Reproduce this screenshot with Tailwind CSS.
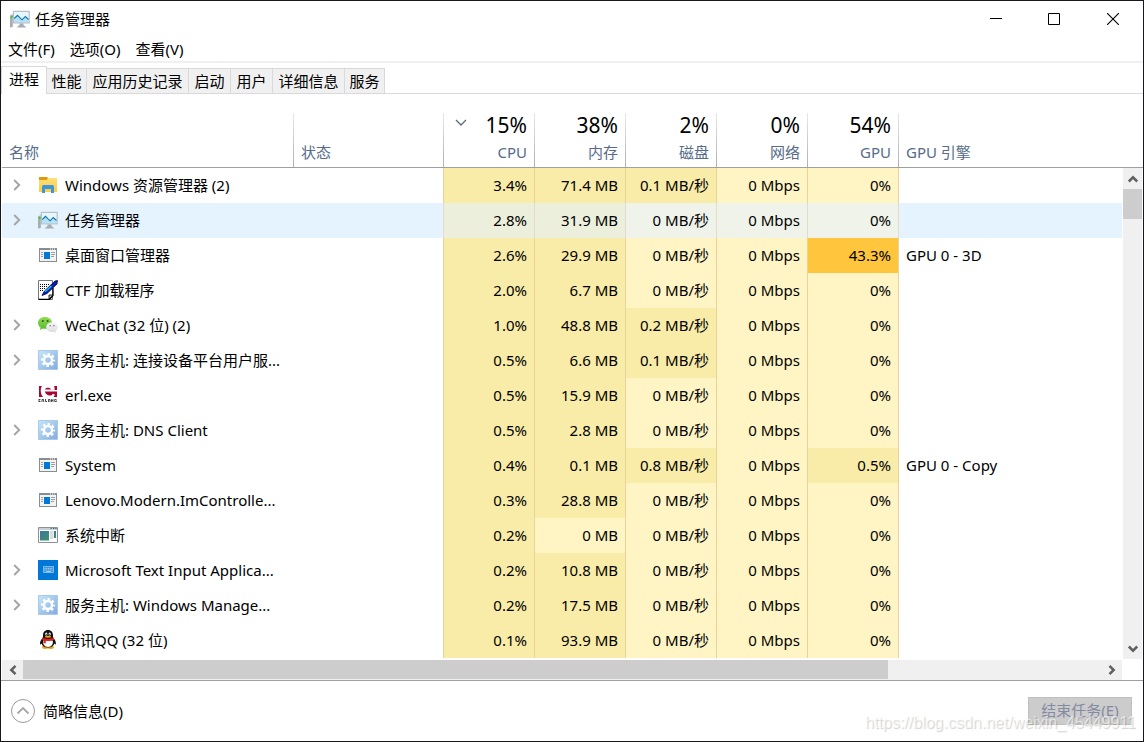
<!DOCTYPE html>
<html lang="zh-CN">
<head>
<meta charset="utf-8">
<title>任务管理器</title>
<script src="https://cdn.jsdelivr.net/npm/@tailwindcss/browser@4"></script>
</head>
<body class="h-screen overflow-hidden bg-white font-['Noto_Sans','Noto_Sans_CJK_SC',sans-serif] text-[15px] leading-5 text-black">

<svg class="absolute size-0" aria-hidden="true">
  <defs>
    <linearGradient id="gGear" x1="0" y1="0" x2="1" y2="1"><stop offset="0" stop-color="#c3e8f9"/><stop offset="1" stop-color="#84a9e2"/></linearGradient>
    <linearGradient id="gFolder" x1="0" y1="0" x2="0" y2="1"><stop offset="0" stop-color="#ffdf76"/><stop offset="1" stop-color="#ffcb43"/></linearGradient>
    <linearGradient id="gApp" x1="0" y1="0" x2="1" y2="1"><stop offset="0" stop-color="#3f72a8"/><stop offset="1" stop-color="#3f9560"/></linearGradient>
    <linearGradient id="gGreen" x1="0" y1="0" x2="0" y2="1"><stop offset="0" stop-color="#93dc4f"/><stop offset="1" stop-color="#55b832"/></linearGradient>
    <linearGradient id="gGrey" x1="0" y1="0" x2="0" y2="1"><stop offset="0" stop-color="#f4f4f4"/><stop offset="1" stop-color="#d9dcdf"/></linearGradient>
  </defs>
  <symbol id="taskmgr" viewBox="0 0 20 20">
    <path d="M0 6.500 2.800 5v13L0 18.500z" fill="#a8adb0"/><path d="M.8 7h2v2h-2z" fill="#2fd32f"/>
    <path d="M2.800 1.800h17v12.600h-17z" fill="#b9bfc3"/><path d="M4 3h14.600v10H4z" fill="#e6f6fd"/>
    <path d="M4 10l3.500-3.500 3 3 1.500 1.500 3.500-3.500 3 3v3H4z" fill="#b4e1f5"/>
    <path d="M4.300 9.500 7.500 6.300 12 10.800l3.300-3.300 3.200 3" fill="none" stroke="#1576b4" stroke-width="1.100"/>
    <path d="M9.500 14.400h4v1.600l3 2.500H6.500l3-2.500z" fill="#a9adb0"/>
  </symbol>
  <symbol id="folder" viewBox="0 0 20 20">
    <path d="M1 2h8.300l1 2v2H1z" fill="#de9a10"/><path d="M1 5h7.500l1.600-2H19v14H1z" fill="url(#gFolder)"/>
    <path d="M4 18v-6.500L5 10h10l1 1.500V18h-3v-4H7v4z" fill="#3a96dd"/>
  </symbol>
  <symbol id="exe" viewBox="0 0 20 20">
    <path d="M1 3h18v14H1z" fill="#8a8d8f"/><path d="M2 5h16v11H2z" fill="#f3f3f3"/>
    <path d="M12 3.500h1v1h-1zM14 3.500h1v1h-1zM16 3.500h1v1h-1z" fill="#fff"/>
    <path d="M6 7h6v7H6z" fill="#0078d7"/>
    <path d="M3 7.500h2M3 9.500h2M3 11.500h2M13 7.500h4M13 9.500h4M13 11.500h3" stroke="#98a0a6"/>
  </symbol>
  <symbol id="ctf" viewBox="0 0 20 20">
    <path d="M.5.500h14v19H.5z" fill="#fff" stroke="#777"/><path d="M.5 19.500h11l3.500-4V8" fill="none" stroke="#000" stroke-width="1.300"/>
    <path d="M11 19v-4h4z" fill="#bbb" stroke="#000" stroke-width=".8"/>
    <path d="M2 4.500h9M2 6.500h7M2 8.500h6M2 10.500h4" stroke="#000" stroke-dasharray="1 1"/>
    <path d="M4 15.500 6.500 11 17 1l2.500-.5L19 4 9 13.500z" fill="#0b1bb0" stroke="#000050" stroke-width=".8"/>
    <path d="M7 11.800 13.500 6" stroke="#15c9ee" stroke-width="1.300"/>
  </symbol>
  <symbol id="wechat" viewBox="0 0 20 20">
    <path d="M7 2C3 2 0 4.600 0 7.900c0 1.900 1 3.500 2.600 4.600L2 15l2.800-1.500c.8.200 1.400.300 2.200.300 4 0 7-2.600 7-5.900S11 2 7 2z" fill="url(#gGreen)"/>
    <circle cx="4.800" cy="6" r="1" fill="#2c5a1c"/><circle cx="9.600" cy="6" r="1" fill="#2c5a1c"/>
    <path d="M14 7.500c-3.300 0-5.800 2.100-5.800 4.700s2.500 4.800 5.800 4.800c.6 0 1.200-.1 1.800-.3l2.200 1.100-.5-1.900c1.300-.9 2.200-2.200 2.200-3.700 0-2.600-2.400-4.700-5.700-4.700z" fill="url(#gGrey)"/>
    <circle cx="12.200" cy="10.800" r=".8" fill="#777"/><circle cx="15.900" cy="10.800" r=".8" fill="#777"/>
  </symbol>
  <symbol id="gear" viewBox="0 0 20 20">
    <path d="M.5.500h19v19H.5z" fill="url(#gGear)" stroke="#a9cbe6"/>
    <circle cx="10" cy="10" r="4" fill="none" stroke="#fff" stroke-width="2.400"/>
    <circle cx="10" cy="10" r="6" fill="none" stroke="#fff" stroke-width="2.200" stroke-dasharray="2.500 2.212" stroke-dashoffset="1.250"/>
  </symbol>
  <symbol id="erl" viewBox="0 0 20 20">
    <path d="M1 1h3C2.200 3.500 2.200 9 5 12H1zM7 4.500C7.500 2 12.500 2 13 4.500zM16 1h3v4h-2.500C16.800 3.500 16.600 2 16 1zM6.700 6.500H19V12h-3.500l1.500-2.300-2-1c-2 3-6.500 2.600-8.300-2.200z" fill="#a90533"/>
    <path d="M1 14v3M1 14.500h1.500M1 16.500h1.500M4 17v-2.500h1.500V16L6 17M7.500 14v2.500H9M10.500 17v-2.500H12V17M13.500 17v-2.500l1.500 2V14M18.500 14.500h-1.800v2h1.800v-1" fill="none" stroke="#222" stroke-width=".8"/>
  </symbol>
  <symbol id="sys" viewBox="0 0 20 20">
    <path d="M.5 2.500h19v15H.5z" fill="#fff" stroke="#8c9297"/><path d="M1 3h18v2H1z" fill="#c8d0d5"/>
    <path d="M12.500 3h1.200v1h-1.200zM15 3h1.200v1H15zM17.300 3h1.200v1h-1.200z" fill="#3d5f83"/>
    <path d="M2 6h9v9.500H2z" fill="url(#gApp)"/><path d="M12 7h3.500M12 9h3.500M12 11h3.500M12 13h3.500" stroke="#b5bbc0"/><path d="M16 6h2v7h-2z" fill="url(#gApp)"/>
  </symbol>
  <symbol id="input" viewBox="0 0 20 20">
    <path d="M0 0h20v20H0z" fill="#0078d7"/><path d="M5.500 6.500h10v6h-10z" fill="#3c97e0" stroke="#8cc1ee" stroke-width=".9"/>
    <path d="M6.500 8.500h8M6.500 10h8" stroke="#b5d9f5" stroke-width=".8" stroke-dasharray="1 .7"/><path d="M8 11.500h5" stroke="#b5d9f5" stroke-width=".8"/>
  </symbol>
  <symbol id="qq" viewBox="0 0 20 20">
    <path d="M4 17c0-1 2-1.500 5.500-1.500s6.500.5 6.500 1.700-1.800 1.800-3.500 1.800S10 18.600 9.800 18.600 8 19 6.700 19 4 18.300 4 17z" fill="#f2a40c"/>
    <path d="M10 0C6.700 0 5 2.500 5 5.200v2C3.500 9 2 11.300 2 13.400c0 1 .5 1.700 1.600.1C4.200 16 6.500 17.600 10 17.600s5.700-1.600 6.300-4.100c1.100 1.600 1.600.9 1.600-.1 0-2.100-1.400-4.400-2.900-6.200v-2C15 2.500 13.300 0 10 0z" fill="#111"/>
    <path d="M5.300 10.500h9.400c.8 3.500-1 6.500-4.700 6.500s-5.500-3-4.700-6.500z" fill="#fff"/>
    <ellipse cx="8.300" cy="4" rx="1.100" ry="1.600" fill="#fff"/><ellipse cx="11.700" cy="4" rx="1.100" ry="1.600" fill="#fff"/><circle cx="8.600" cy="4.200" r=".5"/><circle cx="11.400" cy="4.200" r=".5"/>
    <ellipse cx="10" cy="6.700" rx="3.200" ry="1" fill="#f2a40c"/>
    <path d="M4.700 7.600c3 1.800 7.600 1.800 10.600 0l.9 2c-2.500 1.400-5.700 1.700-8.400 1.200v2.700l-2.300-.4.200-3-1.900-.6z" fill="#e8211d"/>
  </symbol>
  <symbol id="chev" viewBox="0 0 8 12"><path d="M1.200 1l5 5-5 5" fill="none" stroke="currentColor" stroke-width="2"/></symbol>
  <symbol id="arrow" viewBox="0 0 8 12"><path d="M1.500 1.800 5.700 6l-4.200 4.200" fill="none" stroke="currentColor" stroke-width="2.500"/></symbol>
</svg>

<div class="relative flex h-full flex-col border border-[#18181b]">
  <header class="flex h-9 shrink-0 items-center pl-[9px]">
    <svg class="size-5"><use href="#taskmgr"/></svg>
    <h1 class="ml-[5px] flex-1">任务管理器</h1>
    <div class="flex self-stretch">
      <button class="flex w-[58px] items-center justify-center" aria-label="最小化"><svg class="h-3 w-3" viewBox="0 0 12 12"><path d="M0 5.500h12" stroke="#000"/></svg></button>
      <button class="flex w-[58px] items-center justify-center" aria-label="最大化"><svg class="h-3 w-3" viewBox="0 0 12 12"><path d="M.5.500h11v11H.5z" fill="none" stroke="#000"/></svg></button>
      <button class="flex w-[60px] items-center justify-center" aria-label="关闭"><svg class="h-3 w-3" viewBox="0 0 12 12"><path d="M0 0l12 12M12 0L0 12" stroke="#000" stroke-width="1.100"/></svg></button>
    </div>
  </header>
  <nav class="flex h-[26px] shrink-0 items-center gap-[15px] border-b-2 border-[#f0f0f0] pl-[7px]">
    <button>文件(F)</button><button>选项(O)</button><button>查看(V)</button>
  </nav>
  <div role="tablist" class="flex h-[31px] shrink-0 items-end border-b border-[#d9d9d9] pt-[3px]">
    <button role="tab" aria-selected="true" class="-mb-px h-7 w-[46px] border border-b-0 border-[#d9d9d9] bg-white pb-1">进程</button>
    <button role="tab" class="h-[25px] w-10 border-t border-r border-[#d9d9d9] bg-[#f0f0f0]">性能</button>
    <button role="tab" class="h-[25px] w-[102px] border-t border-r border-[#d9d9d9] bg-[#f0f0f0]">应用历史记录</button>
    <button role="tab" class="h-[25px] w-[42px] border-t border-r border-[#d9d9d9] bg-[#f0f0f0]">启动</button>
    <button role="tab" class="h-[25px] w-[42px] border-t border-r border-[#d9d9d9] bg-[#f0f0f0]">用户</button>
    <button role="tab" class="h-[25px] w-[72px] border-t border-r border-[#d9d9d9] bg-[#f0f0f0]">详细信息</button>
    <button role="tab" class="h-[25px] w-10 border-t border-r border-[#d9d9d9] bg-[#f0f0f0]">服务</button>
  </div>

  <main class="flex min-h-0 flex-1 overflow-hidden pl-px">
    <div class="min-w-0 flex-1 overflow-hidden">
      <table class="w-full table-fixed border-separate border-spacing-0">
        <colgroup>
          <col class="w-[292px]"><col class="w-[150px]"><col class="w-[91px]"><col class="w-[91px]"><col class="w-[91px]"><col class="w-[91px]"><col class="w-[91px]"><col>
        </colgroup>
        <thead id="head"></thead>
        <tbody id="rows"></tbody>
      </table>
    </div>
    <div class="flex w-[21px] shrink-0 flex-col">
      <div class="h-[74px] shrink-0 border-b border-[#a0a0a0]"></div>
      <div class="mr-px ml-px flex flex-1 flex-col bg-[#f0f0f0]">
        <button class="flex h-[21px] items-center justify-center text-[#606060]" aria-label="向上滚动"><svg class="h-3 w-2 -rotate-90"><use href="#arrow"/></svg></button>
        <div class="h-[30px] bg-[#cdcdcd]"></div>
        <button class="mt-auto flex h-[21px] items-center justify-center text-[#606060]" aria-label="向下滚动"><svg class="h-3 w-2 rotate-90"><use href="#arrow"/></svg></button>
      </div>
    </div>
  </main>

  <div class="mt-px mr-[21px] ml-px flex h-5 shrink-0 bg-[#f0f0f0]">
    <button class="flex w-[21px] items-center justify-center pb-px text-[#606060]" aria-label="向左滚动"><svg class="h-3 w-2 rotate-180"><use href="#arrow"/></svg></button>
    <div class="flex flex-1"><div class="h-[19px] w-[80.2%] bg-[#cdcdcd]"></div></div>
    <button class="flex w-[21px] items-center justify-center pb-px text-[#606060]" aria-label="向右滚动"><svg class="h-3 w-2"><use href="#arrow"/></svg></button>
  </div>

  <footer class="flex h-[61px] shrink-0 items-center justify-between border-t border-[#a0a0a0] pr-[11px] pl-2.5">
    <button class="flex items-center gap-2">
      <svg class="size-6" viewBox="0 0 24 24" fill="none"><circle cx="12" cy="12" r="11.500" stroke="#999"/><path d="M6.500 14.500 12 9l5.500 5.500" stroke="#a8a8a8" stroke-width="1.800"/></svg>
      <span>简略信息(D)</span>
    </button>
    <button disabled class="h-7 w-[104px] border border-[#bfbfbf] bg-[#cccccc] pb-0.5 text-[#838aa2]">结束任务(E)</button>
  </footer>
  <div class="pointer-events-none absolute right-[7px] bottom-[8px] font-['Liberation_Sans',sans-serif] text-[16px] leading-5 text-white/60 [text-shadow:1px_1px_1px_#00000030]">https://blog.csdn.net/weixin_45449911</div>
</div>

<script>
const heads = [['15%','CPU'],['38%','内存'],['2%','磁盘'],['0%','网络'],['54%','GPU']];
const line = 'bg-[linear-gradient(#e8e8e8,#b0b0b0)] bg-[length:1px_54px] bg-no-repeat bg-[position:right_bottom]';
const hc = 'h-[74px] border-b border-[#a0a0a0] p-0 align-bottom font-normal ';
document.getElementById('head').innerHTML = '<tr>' +
  `<th class="${hc}${line} pb-[5px] pl-[7px] text-left text-[#566b88]">名称</th>` +
  `<th class="${hc}${line} pb-[5px] pl-[7px] text-left text-[#566b88]">状态</th>` +
  heads.map(([p, l], i) => `<th class="${hc}${line} pr-2 pb-[5px] text-right">
    <div class="mb-[3px] flex h-7 items-center justify-between text-[21px] leading-7">${i ? '<span></span>' : '<svg class="mb-1.5 ml-[11px] h-[7px] w-3" viewBox="0 0 12 7"><path d="M1 1l5 5 5-5" fill="none" stroke="#566b88" stroke-width="1.300"/></svg>'}<span>${p}</span></div>
    <div class="text-[#566b88]">${l}</div></th>`).join('') +
  `<th class="${hc} pb-[5px] pl-[7px] text-left text-[#566b88]">GPU 引擎</th></tr>`;

/* expandable, icon, name, cpu, memory, disk, network, gpu, engine */
const data = [
  [1,'folder','Windows 资源管理器 (2)','3.4%','71.4 MB','0.1 MB/秒','0 Mbps','0%',''],
  [1,'taskmgr','任务管理器','2.8%','31.9 MB','0 MB/秒','0 Mbps','0%',''],
  [0,'exe','桌面窗口管理器','2.6%','29.9 MB','0 MB/秒','0 Mbps','43.3%','GPU 0 - 3D'],
  [0,'ctf','CTF 加载程序','2.0%','6.7 MB','0 MB/秒','0 Mbps','0%',''],
  [1,'wechat','WeChat (32 位) (2)','1.0%','48.8 MB','0.2 MB/秒','0 Mbps','0%',''],
  [1,'gear','服务主机: 连接设备平台用户服...','0.5%','6.6 MB','0.1 MB/秒','0 Mbps','0%',''],
  [0,'erl','erl.exe','0.5%','15.9 MB','0 MB/秒','0 Mbps','0%',''],
  [1,'gear','服务主机: DNS Client','0.5%','2.8 MB','0 MB/秒','0 Mbps','0%',''],
  [0,'exe','System','0.4%','0.1 MB','0.8 MB/秒','0 Mbps','0.5%','GPU 0 - Copy'],
  [0,'exe','Lenovo.Modern.ImControlle...','0.3%','28.8 MB','0 MB/秒','0 Mbps','0%',''],
  [0,'sys','系统中断','0.2%','0 MB','0 MB/秒','0 Mbps','0%',''],
  [1,'input','Microsoft Text Input Applica...','0.2%','10.8 MB','0 MB/秒','0 Mbps','0%',''],
  [1,'gear','服务主机: Windows Manage...','0.2%','17.5 MB','0 MB/秒','0 Mbps','0%',''],
  [0,'qq','腾讯QQ (32 位)','0.1%','93.9 MB','0 MB/秒','0 Mbps','0%','']
];
function heat(v, selected) {
  const n = parseFloat(v);
  if (selected) return n ? 'bg-[#ebefdb] border-[#e3dcc8]' : 'bg-[#eff3ea] border-[#e3dcc8]';
  if (n > 40 && v.endsWith('%')) return 'bg-[#ffc53d] border-[#e8d49b]';
  return n ? 'bg-[#f9eca8] border-[#e8d49b]' : 'bg-[#fff4c4] border-[#e8d49b]';
}
document.getElementById('rows').innerHTML = data.map((r, i) => {
  const sel = i === 1;
  return `<tr class="${sel ? 'bg-[#e5f3ff]' : ''}">
    <td class="h-[35px] p-0 pb-0.5"><div class="flex items-center whitespace-nowrap pl-[11px]">
      <button class="flex w-[25px] items-center text-[#a6a6a6]" ${r[0] ? 'aria-label="展开"' : 'disabled aria-hidden="true"'}>${r[0] ? '<svg class="h-3 w-2"><use href="#chev"/></svg>' : ''}</button>
      <svg class="size-5 shrink-0"><use href="#${r[1]}"/></svg><span class="ml-[7px]">${r[2]}</span></div></td>
    <td class="border-r p-0 ${sel ? 'border-[#e3dcc8]' : 'border-[#e8d49b]'}"></td>` +
    r.slice(3, 8).map(v => `<td class="border-r p-0 pr-[7px] pb-0.5 text-right whitespace-nowrap ${heat(v, sel)}">${v}</td>`).join('') +
    `<td class="p-0 pb-0.5 pl-[7px]">${r[8]}</td></tr>`;
}).join('');
</script>
</body>
</html>
